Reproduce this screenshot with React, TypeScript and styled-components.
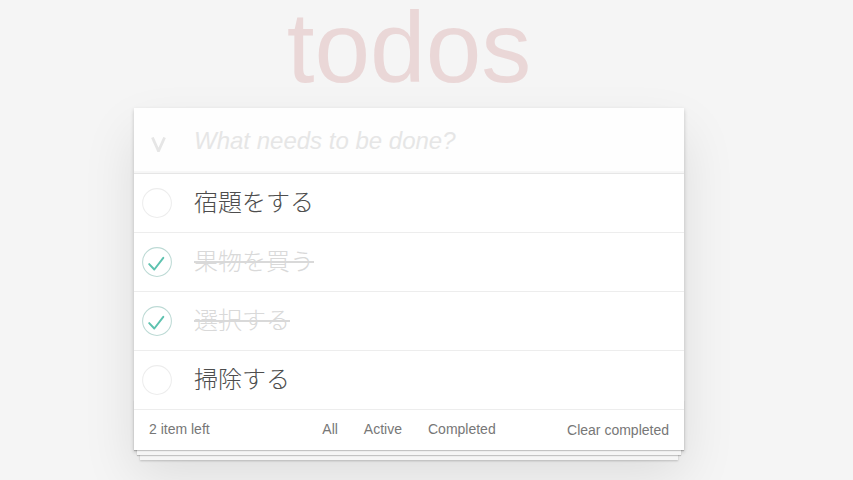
import React from "react";
import styled, { createGlobalStyle } from "styled-components";

const Global = createGlobalStyle`
  html, body { margin: 0; padding: 0; }
  body {
    background: #f5f5f5;
    font-family: "Liberation Sans", "Noto Sans CJK JP", sans-serif;
    font-size: 14px;
    line-height: 1.4em;
    color: #4d4d4d;
    font-weight: 300;
    -webkit-font-smoothing: antialiased;
  }
`;

const Page = styled.div`
  width: 550px;
  margin: 0 0 0 134px;
  padding-bottom: 40px;
`;

const Title = styled.h1`
  margin: 0 0 8px;
  height: 100px;
  line-height: 100px;
  font-size: 100px;
  font-weight: 100;
  text-align: center;
  color: rgba(175, 47, 47, 0.15);
  font-family: "Liberation Sans", sans-serif;
  transform: translateY(-3px);
`;

const Panel = styled.section`
  position: relative;
  background: #fff;
  box-shadow: 0 2px 4px 0 rgba(0, 0, 0, 0.2), 0 25px 50px 0 rgba(0, 0, 0, 0.1);
`;

const Header = styled.header`
  display: flex;
  align-items: center;
  height: 65px;
  background: rgba(0, 0, 0, 0.003);
  box-shadow: inset 0 -2px 1px rgba(0, 0, 0, 0.03);
`;

const ToggleAll = styled.div`
  width: 60px;
  box-sizing: border-box;
  padding: 8px 0 0 17px;
  display: flex;
  align-items: center;
`;

const NewTodo = styled.input`
  flex: 1;
  min-width: 0;
  border: none;
  outline: none;
  background: transparent;
  padding: 16px 16px 16px 0;
  font-family: "Liberation Sans", "Noto Sans CJK JP", sans-serif;
  font-size: 24px;
  line-height: 33px;
  color: #4d4d4d;
  &::placeholder {
    font-style: italic;
    font-weight: 300;
    color: #e6e6e6;
  }
`;

const List = styled.ul`
  list-style: none;
  margin: 0;
  padding: 0;
  border-top: 1px solid #e6e6e6;
`;

const Row = styled.li`
  display: flex;
  align-items: center;
  border-bottom: 1px solid #ededed;
`;

const Toggle = styled.div`
  width: 60px;
  box-sizing: border-box;
  padding-left: 8px;
  display: flex;
  align-items: center;
`;

const Label = styled.label<{ $done: boolean }>`
  flex: 1;
  padding: 15px 15px 15px 0;
  font-size: 24px;
  line-height: 28px;
  font-weight: 300;
  font-family: "Liberation Sans", "Noto Sans CJK JP", sans-serif;
  color: ${(p) => (p.$done ? "#d9d9d9" : "#4d4d4d")};
  text-decoration: ${(p) => (p.$done ? "line-through" : "none")};
`;

const Footer = styled.footer`
  position: relative;
  display: grid;
  grid-template-columns: 1fr auto 1fr;
  grid-template-rows: 20px;
  align-items: center;
  padding: 10px 15px;
  color: #777;
  font-size: 14px;
  line-height: 20px;
  &::before {
    content: "";
    position: absolute;
    right: 0;
    bottom: 0;
    left: 0;
    height: 50px;
    overflow: hidden;
    box-shadow: 0 1px 1px rgba(0, 0, 0, 0.2), 0 8px 0 -3px #f6f6f6,
      0 9px 1px -3px rgba(0, 0, 0, 0.2), 0 16px 0 -6px #f6f6f6,
      0 17px 2px -6px rgba(0, 0, 0, 0.2);
  }
`;

const Count = styled.span`
  justify-self: start;
  transform: translateY(-1px);
`;

const Filters = styled.ul`
  display: flex;
  gap: 4px;
  list-style: none;
  margin: 0;
  padding: 0;
  height: 20px;
  transform: translateY(-1px);
`;

const FilterLink = styled.a`
  display: block;
  margin: -4px 3px;
  padding: 3px 7px;
  border: 1px solid transparent;
  border-radius: 3px;
  color: inherit;
  text-decoration: none;
`;

const Clear = styled.button`
  justify-self: end;
  border: none;
  background: none;
  padding: 0;
  margin: 0;
  font: inherit;
  font-size: 14px;
  line-height: 20px;
  color: #777;
  cursor: pointer;
`;

const Circle = ({ done }: { done: boolean }) => (
  <svg width="30" height="30" viewBox="0 0 100 100">
    <circle
      cx="50"
      cy="50"
      r="48"
      fill="none"
      stroke={done ? "#bddad5" : "#ededed"}
      strokeWidth="3.5"
    />
    {done && (
      <polyline
        points="24,57 41,75 71,36"
        fill="none"
        stroke="#5dc2af"
        strokeWidth="6.5"
        strokeLinecap="round"
        strokeLinejoin="round"
      />
    )}
  </svg>
);

const todos = [
  { text: "宿題をする", done: false },
  { text: "果物を買う", done: true },
  { text: "選択する", done: true },
  { text: "掃除する", done: false },
];

export default function App() {
  return (
    <>
      <Global />
      <Page>
        <Title>todos</Title>
        <Panel>
          <Header>
            <ToggleAll>
              <svg width="15" height="15" viewBox="0 0 15 15">
                <polyline
                  points="1.4,0.5 7.5,14 13.6,0.5"
                  fill="none"
                  stroke="#e6e6e6"
                  strokeWidth="2.8"
                />
              </svg>
            </ToggleAll>
            <NewTodo placeholder="What needs to be done?" />
          </Header>
          <List>
            {todos.map((t) => (
              <Row key={t.text}>
                <Toggle>
                  <Circle done={t.done} />
                </Toggle>
                <Label $done={t.done}>{t.text}</Label>
              </Row>
            ))}
          </List>
          <Footer>
            <Count>2 item left</Count>
            <Filters>
              <li>
                <FilterLink href="#/">All</FilterLink>
              </li>
              <li>
                <FilterLink href="#/active">Active</FilterLink>
              </li>
              <li>
                <FilterLink href="#/completed">Completed</FilterLink>
              </li>
            </Filters>
            <Clear>Clear completed</Clear>
          </Footer>
        </Panel>
      </Page>
    </>
  );
}
